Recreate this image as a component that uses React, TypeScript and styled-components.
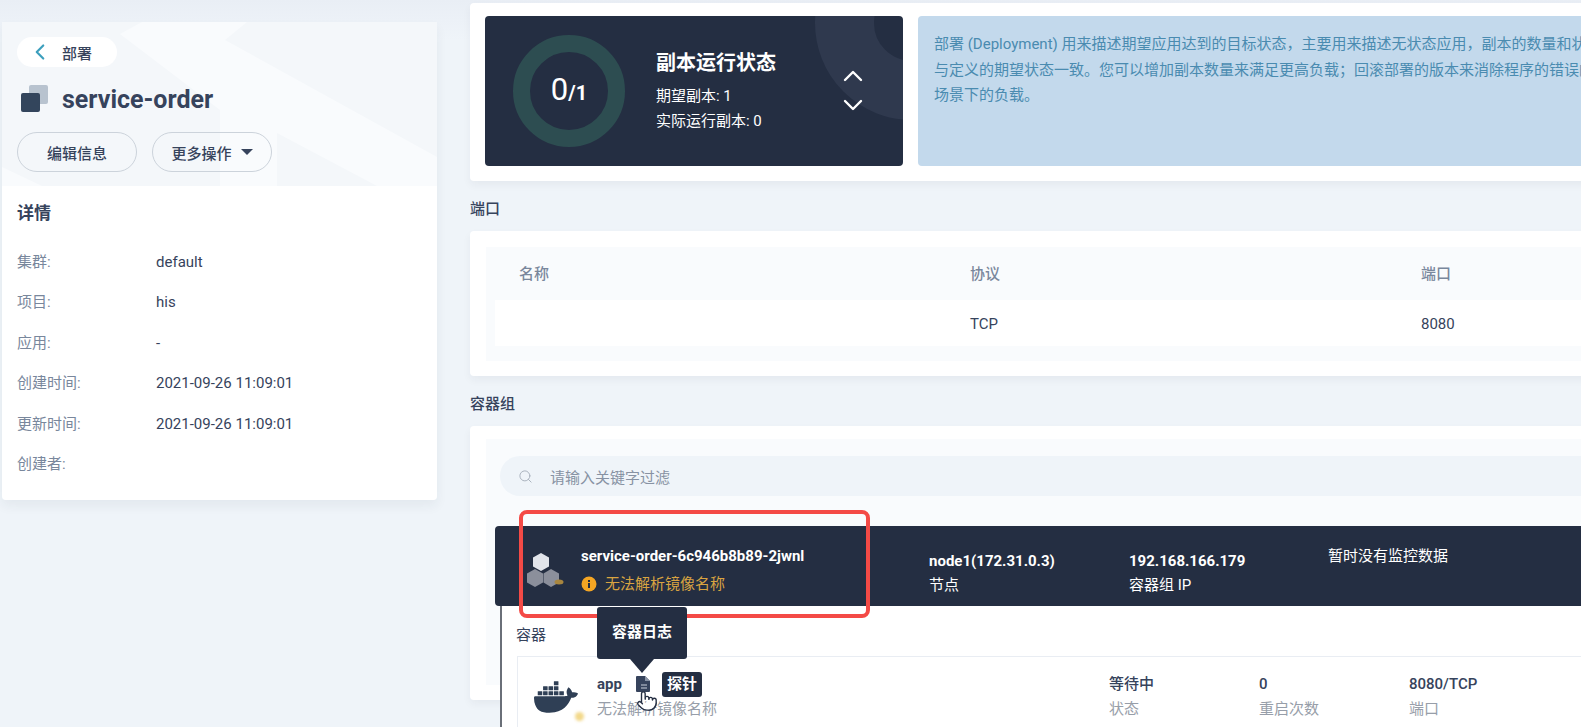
import React from 'react';
import styled, { createGlobalStyle } from 'styled-components';
import { ChevronLeft, ChevronUp, ChevronDown, Search, Pointer } from 'lucide-react';
import { SiDocker } from 'react-icons/si';

const dark = '#242e42';
const ink = '#36435c';
const muted = '#79879c';
const fontStack = 'Roboto, "Noto Sans CJK SC", "Liberation Sans", sans-serif';

const GlobalStyle = createGlobalStyle`
  html, body {
    margin: 0;
    padding: 0;
    overflow: hidden;
    background: #eff4f9;
  }
  *, *::before, *::after {
    box-sizing: border-box;
  }
`;

const Page = styled.div`
  display: flex;
  align-items: flex-start;
  width: 1581px;
  height: 727px;
  overflow: hidden;
  font-family: ${fontStack};
  font-size: 15px;
  color: ${ink};
  background: linear-gradient(#e9eef5 0, #eff4f9 40px);
`;

const Sidebar = styled.aside`
  flex: none;
  width: 435px;
  margin: 22px 0 0 2px;
  border-radius: 4px;
  box-shadow: 0 6px 12px rgba(36, 46, 66, 0.06);
`;

const SideHeader = styled.header`
  position: relative;
  height: 164px;
  padding: 15px;
  overflow: hidden;
  background: #f4f7fa;
`;

const HeaderArt = styled.svg`
  position: absolute;
  left: 0;
  top: 0;
`;

const BackPill = styled.div`
  position: relative;
  display: flex;
  align-items: center;
  width: 100px;
  height: 30px;
  padding-left: 10px;
  border-radius: 15px;
  background: #fff;
  font-weight: 500;
  color: ${ink};
  svg {
    margin-right: 9px;
  }
`;

const TitleRow = styled.div`
  position: relative;
  display: flex;
  align-items: center;
  gap: 14px;
  height: 27px;
  margin: 18px 0 0 4px;
`;

const Title = styled.h1`
  margin: 0;
  padding-top: 2px;
  font-size: 25px;
  font-weight: 700;
  line-height: 27px;
  color: ${ink};
`;

const ButtonRow = styled.div`
  position: relative;
  display: flex;
  gap: 15px;
  margin-top: 20px;
`;

const PillButton = styled.button`
  display: flex;
  align-items: center;
  justify-content: center;
  gap: 9px;
  width: 120px;
  height: 40px;
  padding: 0;
  border: 1px solid #ccd3db;
  border-radius: 20px;
  background: transparent;
  font-family: inherit;
  font-size: 15px;
  font-weight: 500;
  color: ${ink};
`;

const Caret = styled.span`
  width: 0;
  height: 0;
  border-left: 6px solid transparent;
  border-right: 6px solid transparent;
  border-top: 6px solid ${ink};
`;

const Details = styled.section`
  padding: 17px 15px 16px;
  background: #fff;
  border-radius: 0 0 4px 4px;
`;

const DetailsTitle = styled.h2`
  margin: 0 0 19px;
  font-size: 17px;
  font-weight: 700;
  line-height: 20px;
  color: ${ink};
`;

const DetailRow = styled.div`
  display: flex;
  align-items: baseline;
  height: 40.4px;
  line-height: 40.4px;
`;

const DetailLabel = styled.span`
  width: 139px;
  color: ${muted};
`;

const DetailValue = styled.span`
  color: ${ink};
`;

const Main = styled.main`
  flex: none;
  width: 1131px;
  margin-left: 33px;
  padding-top: 3px;
`;

const TopCard = styled.section`
  display: flex;
  gap: 15px;
  height: 178px;
  padding: 13px 15px;
  background: #fff;
  border-radius: 4px;
  box-shadow: 0 4px 8px rgba(36, 46, 66, 0.05);
`;

const StatusCard = styled.div`
  position: relative;
  flex: none;
  display: flex;
  align-items: center;
  width: 418px;
  height: 150px;
  padding-left: 28px;
  overflow: hidden;
  border-radius: 4px;
  background: ${dark};
  color: #fff;
  &::before {
    content: '';
    position: absolute;
    left: 330px;
    top: -90px;
    width: 194px;
    height: 194px;
    border: 59px solid #2f394e;
    border-radius: 50%;
  }
`;

const Ring = styled.div`
  position: relative;
  flex: none;
  display: flex;
  align-items: baseline;
  justify-content: center;
  width: 112px;
  height: 112px;
  padding-top: 20px;
  border: 17px solid #2d4d51;
  border-radius: 50%;
`;

const RingValue = styled.span`
  font-size: 31px;
  font-weight: 400;
  line-height: 36px;
`;

const RingTotal = styled.span`
  font-size: 20px;
  font-weight: 700;
`;

const StatusText = styled.div`
  position: relative;
  flex: none;
  width: 181px;
  margin-left: 31px;
`;

const StatusTitle = styled.div`
  margin-bottom: 7px;
  font-size: 20px;
  font-weight: 700;
  line-height: 28px;
`;

const StatusLine = styled.div`
  line-height: 25px;
`;

const Stepper = styled.div`
  position: relative;
  display: flex;
  flex-direction: column;
  margin-top: -1px;
  svg + svg {
    margin-top: -3px;
  }
`;

const InfoCard = styled.div`
  flex: 1;
  min-width: 0;
  height: 150px;
  padding: 16px;
  overflow: hidden;
  border-radius: 4px;
  background: #c3d9ec;
  color: #4a8bb0;
`;

const InfoLine = styled.div`
  height: 25.5px;
  line-height: 25.5px;
  white-space: nowrap;
`;

const SectionLabel = styled.h3`
  margin: 18px 0 12px;
  font-size: 15px;
  font-weight: 500;
  line-height: 20px;
  color: ${ink};
`;

const PortCard = styled.section`
  height: 145px;
  padding: 16px 0 15px 16px;
  background: #fff;
  border-radius: 4px;
  box-shadow: 0 4px 8px rgba(36, 46, 66, 0.05);
`;

const PortTable = styled.div`
  height: 114px;
  background: #f9fbfd;
`;

const PortHeader = styled.div`
  display: grid;
  grid-template-columns: 451px 451px 1fr;
  align-items: center;
  height: 53px;
  padding: 0 0 2px 33px;
  font-weight: 500;
  color: ${muted};
`;

const PortRow = styled.div`
  display: grid;
  grid-template-columns: 451px 451px 1fr;
  align-items: center;
  height: 46px;
  margin-left: 9px;
  padding: 2px 0 0 24px;
  background: #fff;
  color: ${ink};
`;

const PodCard = styled.section`
  height: 274px;
  padding: 13px 0 0 16px;
  background: #fff;
  border-radius: 4px;
  box-shadow: 0 4px 8px rgba(36, 46, 66, 0.05);
`;

const PodInner = styled.div`
  height: 246px;
  padding-top: 17px;
  background: #f9fbfd;
`;

const SearchBar = styled.div`
  display: flex;
  align-items: center;
  gap: 17px;
  height: 40px;
  margin-left: 14px;
  padding-left: 18px;
  border-radius: 20px 0 0 20px;
  background: #eff4f9;
  color: #8792a3;
  svg {
    color: #a6afbb;
  }
`;

const PodRow = styled.div`
  position: relative;
  z-index: 1;
  display: flex;
  height: 80px;
  margin: 30px 0 0 9px;
  padding-left: 32px;
  border-radius: 4px 0 0 4px;
  background: ${dark};
  color: #fff;
`;

const PodIcon = styled.svg`
  flex: none;
  width: 38px;
  height: 36px;
  margin: 26px 16px 0 0;
`;

const PodCell = styled.div<{ $width: number; $top: number; $gap: number }>`
  flex: none;
  width: ${(p) => p.$width}px;
  padding-top: ${(p) => p.$top}px;
  display: flex;
  flex-direction: column;
  gap: ${(p) => p.$gap}px;
  line-height: 20px;
`;

const PodName = styled.strong`
  font-size: 15px;
  font-weight: 700;
`;

const Warning = styled.div`
  display: flex;
  align-items: center;
  gap: 8px;
  color: #d9a441;
  svg {
    flex: none;
  }
`;

const Highlight = styled.div`
  position: absolute;
  z-index: 5;
  left: 24px;
  top: -16px;
  width: 351px;
  height: 108px;
  border: 4px solid #f44a46;
  border-radius: 8px;
  pointer-events: none;
`;

const ContainerPanel = styled.div`
  height: 130px;
  margin-left: 14px;
  padding: 19px 0 0 14px;
  background: #fff;
  border-left: 2px solid #6a6f78;
`;

const PanelLabel = styled.div`
  line-height: 20px;
  color: ${ink};
`;

const ContainerRow = styled.div`
  display: flex;
  height: 90px;
  margin: 11px 0 0 1px;
  padding: 17px 0 0 16px;
  border-left: 1px solid #e9edf3;
  border-top: 1px solid #e9edf3;
`;

const DockerBox = styled.div`
  position: relative;
  flex: none;
  width: 63px;
  padding-top: 1px;
  color: #2f3f55;
  &::after {
    content: '';
    position: absolute;
    left: 41px;
    top: 38px;
    width: 9px;
    height: 9px;
    border-radius: 50%;
    background: #f2d88a;
    filter: blur(1.5px);
  }
`;

const ContainerMain = styled.div`
  flex: none;
  width: 512px;
`;

const ContainerTop = styled.div`
  display: flex;
  align-items: center;
  gap: 14px;
  height: 20px;
  margin-bottom: 5px;
  font-weight: 700;
`;

const DocWrap = styled.span`
  position: relative;
  display: flex;
  width: 14px;
  height: 16px;
`;

const Tooltip = styled.div`
  position: absolute;
  z-index: 3;
  left: 6px;
  bottom: 33px;
  width: 90px;
  height: 52px;
  margin-left: -45px;
  padding-top: 15px;
  border-radius: 3px;
  background: ${dark};
  color: #fff;
  font-weight: 700;
  line-height: 20px;
  text-align: center;
  &::after {
    content: '';
    position: absolute;
    left: 33px;
    top: 52px;
    border-left: 12px solid transparent;
    border-right: 12px solid transparent;
    border-top: 14px solid ${dark};
  }
`;

const HandCursor = styled.span`
  position: absolute;
  z-index: 4;
  left: 0;
  top: 14px;
  display: flex;
`;

const ProbeTag = styled.span`
  margin-left: -2px;
  padding: 0 5px;
  height: 25px;
  border-radius: 3px;
  background: ${dark};
  color: #fff;
  line-height: 25px;
`;

const SubText = styled.div`
  line-height: 20px;
  color: #979ea9;
`;

const StatCell = styled.div`
  flex: none;
  width: 150px;
`;

const StatValue = styled.div`
  margin-bottom: 5px;
  font-weight: 500;
  line-height: 20px;
`;

const details = [
  ['集群:', 'default'],
  ['项目:', 'his'],
  ['应用:', '-'],
  ['创建时间:', '2021-09-26 11:09:01'],
  ['更新时间:', '2021-09-26 11:09:01'],
  ['创建者:', ''],
];

const infoLines = [
  '部署 (Deployment) 用来描述期望应用达到的目标状态，主要用来描述无状态应用，副本的数量和状',
  '与定义的期望状态一致。您可以增加副本数量来满足更高负载；回滚部署的版本来消除程序的错误的',
  '场景下的负载。',
];

const stats = [
  ['等待中', '状态'],
  ['0', '重启次数'],
  ['8080/TCP', '端口'],
];

export default function App() {
  return (
    <Page>
      <GlobalStyle />
      <Sidebar>
        <SideHeader>
          <HeaderArt width="435" height="164" viewBox="0 0 435 164">
            <polygon points="118,12 140,0 245,0 223,18 435,135 435,164 375,164 275,111 275,164 218,164 218,88" fill="#f9fbfd" />
            <polygon points="0,145 40,164 0,164" fill="#f9fbfd" />
          </HeaderArt>
          <BackPill>
            <ChevronLeft size={26} color="#3c9fbd" strokeWidth={2} />
            部署
          </BackPill>
          <TitleRow>
            <svg width="27" height="27" viewBox="0 0 27 27">
              <rect x="8" y="0" width="19" height="19" rx="2" fill="#b8c3cf" />
              <rect x="0" y="8" width="19" height="19" rx="2" fill="#33455c" />
            </svg>
            <Title>service-order</Title>
          </TitleRow>
          <ButtonRow>
            <PillButton>编辑信息</PillButton>
            <PillButton>
              更多操作
              <Caret />
            </PillButton>
          </ButtonRow>
        </SideHeader>
        <Details>
          <DetailsTitle>详情</DetailsTitle>
          {details.map(([label, value]) => (
            <DetailRow key={label}>
              <DetailLabel>{label}</DetailLabel>
              <DetailValue>{value}</DetailValue>
            </DetailRow>
          ))}
        </Details>
      </Sidebar>

      <Main>
        <TopCard>
          <StatusCard>
            <Ring>
              <RingValue>0</RingValue>
              <RingTotal>/1</RingTotal>
            </Ring>
            <StatusText>
              <StatusTitle>副本运行状态</StatusTitle>
              <StatusLine>期望副本: 1</StatusLine>
              <StatusLine>实际运行副本: 0</StatusLine>
            </StatusText>
            <Stepper>
              <ChevronUp size={32} color="#fff" strokeWidth={1.8} />
              <ChevronDown size={32} color="#fff" strokeWidth={1.8} />
            </Stepper>
          </StatusCard>
          <InfoCard>
            {infoLines.map((line) => (
              <InfoLine key={line}>{line}</InfoLine>
            ))}
          </InfoCard>
        </TopCard>

        <SectionLabel>端口</SectionLabel>
        <PortCard>
          <PortTable>
            <PortHeader>
              <span>名称</span>
              <span>协议</span>
              <span>端口</span>
            </PortHeader>
            <PortRow>
              <span />
              <span>TCP</span>
              <span>8080</span>
            </PortRow>
          </PortTable>
        </PortCard>

        <SectionLabel>容器组</SectionLabel>
        <PodCard>
          <PodInner>
            <SearchBar>
              <Search size={15} strokeWidth={1.5} />
              请输入关键字过滤
            </SearchBar>
            <PodRow>
              <PodIcon viewBox="0 0 38 36">
                <polygon points="14,1 22,5.5 22,14.5 14,19 6,14.5 6,5.5" fill="#e1e4ea" />
                <polygon points="8,17 16,21.5 16,30.5 8,35 0,30.5 0,21.5" fill="#8b8f9b" />
                <polygon points="24,17 32,21.5 32,30.5 24,35 16.5,30.5 16.5,21.5" fill="#8b8f9b" />
                <ellipse cx="32" cy="30" rx="4.5" ry="2.5" fill="#a8863f" />
              </PodIcon>
              <PodCell $width={348} $top={20} $gap={8}>
                <PodName>service-order-6c946b8b89-2jwnl</PodName>
                <Warning>
                  <svg width="16" height="16" viewBox="0 0 16 16">
                    <circle cx="8" cy="8" r="7.5" fill="#f5a623" />
                    <rect x="7" y="7" width="2" height="5" fill="#242e42" />
                    <rect x="7" y="4" width="2" height="2" fill="#242e42" />
                  </svg>
                  无法解析镜像名称
                </Warning>
              </PodCell>
              <PodCell $width={200} $top={25} $gap={4}>
                <PodName>node1(172.31.0.3)</PodName>
                <span>节点</span>
              </PodCell>
              <PodCell $width={199} $top={25} $gap={4}>
                <PodName>192.168.166.179</PodName>
                <span>容器组 IP</span>
              </PodCell>
              <PodCell $width={200} $top={20} $gap={5}>
                <span>暂时没有监控数据</span>
              </PodCell>
              <Highlight />
            </PodRow>
            <ContainerPanel>
              <PanelLabel>容器</PanelLabel>
              <ContainerRow>
                <DockerBox>
                  <SiDocker size={44} />
                </DockerBox>
                <ContainerMain>
                  <ContainerTop>
                    app
                    <DocWrap>
                      <svg width="14" height="16" viewBox="0 0 14 16">
                        <path d="M1 0h8l5 5v10a1 1 0 0 1-1 1H1a1 1 0 0 1-1-1V1a1 1 0 0 1 1-1z" fill="#36435c" />
                        <path d="M9 0l5 5H9z" fill="#8a94a6" />
                        <path d="M5 9h6M5 12h6" stroke="#c9d0da" strokeWidth="1" />
                      </svg>
                      <Tooltip>容器日志</Tooltip>
                      <HandCursor>
                        <Pointer size={22} fill="#fff" color="#242e42" strokeWidth={1.5} />
                      </HandCursor>
                    </DocWrap>
                    <ProbeTag>探针</ProbeTag>
                  </ContainerTop>
                  <SubText>无法解析镜像名称</SubText>
                </ContainerMain>
                {stats.map(([value, label]) => (
                  <StatCell key={label}>
                    <StatValue>{value}</StatValue>
                    <SubText>{label}</SubText>
                  </StatCell>
                ))}
              </ContainerRow>
            </ContainerPanel>
          </PodInner>
        </PodCard>
      </Main>
    </Page>
  );
}
